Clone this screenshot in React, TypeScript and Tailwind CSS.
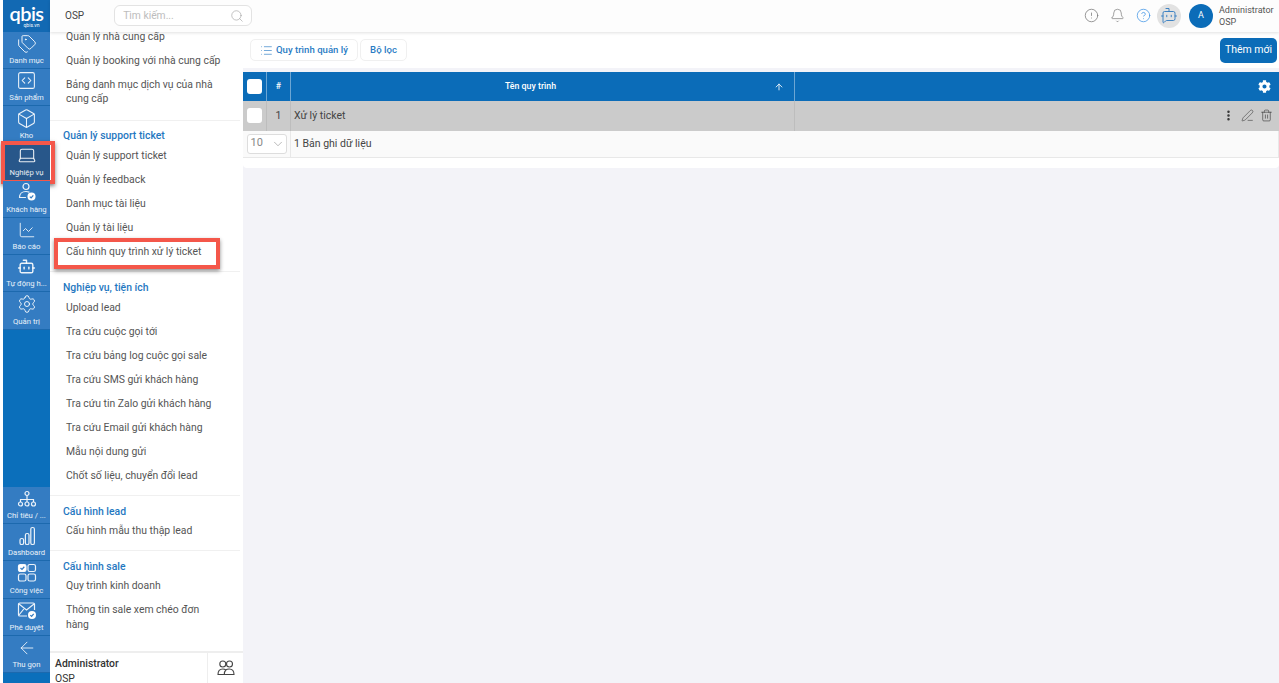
import type { ReactNode } from "react";
import { FaCog } from "react-icons/fa";
import { ArrowUp, ChevronDown, List, PenLine, Search, Trash2, EllipsisVertical, Settings, Bell, CircleHelp, CircleAlert, ArrowLeft, Tags, SquareCode, Box, Laptop, ChartLine, Bot, BotMessageSquare } from "lucide-react";

function UserBadgeIcon() {
  return (
    <svg width="20" height="20" viewBox="0 0 20 20" fill="none" stroke="currentColor" strokeWidth="1.2">
      <circle cx="9" cy="4.5" r="3" />
      <path d="M2.5 15.5c0-3.5 2.5-6 6.5-6 1.2 0 2.2.2 3 .6M2.5 15.5h6" strokeLinecap="round" />
      <circle cx="14.5" cy="14.5" r="4" fill="white" stroke="none" />
      <path d="M12.8 14.6l1.3 1.3 2.2-2.6" stroke="#347cc2" strokeWidth="1.2" />
    </svg>
  );
}

function OrgIcon() {
  return (
    <svg width="20" height="18" viewBox="0 0 20 18" fill="none" stroke="currentColor" strokeWidth="1.2">
      <circle cx="10" cy="3.5" r="2" />
      <path d="M10 5.5v4M3.5 12V9.5h13V12M10 9.5V12" />
      <circle cx="3.5" cy="14" r="2" />
      <circle cx="10" cy="14" r="2" />
      <circle cx="16.5" cy="14" r="2" />
    </svg>
  );
}

function BarsIcon() {
  return (
    <svg width="20" height="20" viewBox="0 0 20 20" fill="none" stroke="currentColor" strokeWidth="1.2">
      <rect x="3" y="12.5" width="3.6" height="6" rx="1.6" />
      <rect x="8.4" y="7.5" width="3.6" height="11" rx="1.6" />
      <rect x="13.8" y="1.5" width="3.6" height="17" rx="1.6" />
    </svg>
  );
}

function TasksIcon() {
  return (
    <svg width="20" height="20" viewBox="0 0 20 20" fill="none" stroke="currentColor" strokeWidth="1.2">
      <rect x="1.5" y="1.5" width="7.5" height="7" rx="1.8" fill="white" />
      <path d="M3.5 5l1.5 1.4 2.3-2.6" stroke="#347cc2" strokeWidth="1.3" />
      <rect x="11" y="1.5" width="7.5" height="7" rx="1.8" />
      <rect x="1.5" y="11" width="7.5" height="7" rx="1.8" />
      <rect x="11" y="11" width="7.5" height="7" rx="1.8" />
    </svg>
  );
}

function MailBadgeIcon() {
  return (
    <svg width="20" height="19" viewBox="0 0 20 19" fill="none" stroke="currentColor" strokeWidth="1.2">
      <path d="M10 15H2.8A1.3 1.3 0 0 1 1.5 13.700V3.300A1.300 1.300 0 0 1 2.800 2h13.400a1.300 1.300 0 0 1 1.300 1.300V9" />
      <path d="M2 3l7.500 6L17 3M2 14l4.800-6" />
      <circle cx="15" cy="14" r="4" fill="white" stroke="none" />
      <path d="M13.300 14.100l1.300 1.300 2.100-2.600" stroke="#347cc2" strokeWidth="1.200" />
    </svg>
  );
}

function PeopleIcon() {
  return (
    <svg width="18" height="16" viewBox="0 0 18 16" fill="none" stroke="#444" strokeWidth="1.100">
      <circle cx="5.800" cy="4" r="3" />
      <circle cx="12.500" cy="4" r="3" />
      <path d="M1 14.500c0-3.500 2-5.500 4.800-5.500 1.200 0 2.200.3 3 1 .8-.7 1.900-1 3.400-1 2.800 0 4.800 2 4.800 5.500zM8.800 10c-1 1-1.500 2.500-1.500 4.500" />
    </svg>
  );
}

const topRail = [
  { label: "Danh mục", icon: <Tags size={20} strokeWidth={1.2} /> },
  { label: "Sản phẩm", icon: <SquareCode size={21} strokeWidth={1.2} /> },
  { label: "Kho", icon: <Box size={21} strokeWidth={1.2} /> },
  { label: "Nghiệp vụ", icon: <Laptop size={20} strokeWidth={1.3} />, active: true },
  { label: "Khách hàng", icon: <UserBadgeIcon /> },
  { label: "Báo cáo", icon: <ChartLine size={18} strokeWidth={1.2} /> },
  { label: "Tự động h...", icon: <Bot size={19} strokeWidth={1.8} /> },
  { label: "Quản trị", icon: <Settings size={20} strokeWidth={1.2} /> },
];

const bottomRail = [
  { label: "Chỉ tiêu / ...", icon: <OrgIcon /> },
  { label: "Dashboard", icon: <BarsIcon /> },
  { label: "Công việc", icon: <TasksIcon /> },
  { label: "Phê duyệt", icon: <MailBadgeIcon /> },
  { label: "Thu gọn", icon: <ArrowLeft size={20} strokeWidth={1.1} /> },
];

function RailItem({ label, icon, active }: { label: string; icon: ReactNode; active?: boolean }) {
  return (
    <div
      className={`relative flex h-[37.2px] flex-col items-center justify-end border-b border-[#1c69ae] pb-[2px] text-[7.7px] leading-[11px] text-white/90 ${
        active ? "bg-[#28578a]" : "bg-[#347cc2]"
      }`}
    >
      <span className="flex h-[23px] items-center">{icon}</span>
      <span className="whitespace-nowrap">{label}</span>
      {active && (
        <span className="absolute -bottom-[4px] -left-[2px] -right-[5px] -top-[3px] border-4 border-[#f4574a] shadow-[0_2px_4px_rgba(0,0,0,0.5)]" />
      )}
    </div>
  );
}

function MenuItem({ children, boxed }: { children: ReactNode; boxed?: boolean }) {
  return (
    <div className="relative py-[4.8px] pl-4 pr-[17px] text-[10.4px] leading-[14.5px] text-[#555]">
      {children}
      {boxed && (
        <span className="absolute -bottom-[4px] -top-[3px] left-[4px] right-[20px] border-4 border-[#f4574a] shadow-[0_2px_4px_rgba(0,0,0,0.45)]" />
      )}
    </div>
  );
}

function MenuGroup({ title, items, last }: { title: string; items: string[]; last?: boolean }) {
  return (
    <div className={`mr-[3px] pb-[6.5px] pt-[7.5px] ${last ? "" : "border-b border-[#f0f0f0]"}`}>
      <div className="pl-[13px] text-[10.4px] font-medium leading-[16px] text-[#1f78c1]">{title}</div>
      <div>
        {items.map((t) => (
          <MenuItem key={t} boxed={t === "Cấu hình quy trình xử lý ticket"}>
            {t}
          </MenuItem>
        ))}
      </div>
    </div>
  );
}

function Checkbox() {
  return <div className="h-[15px] w-[15px] rounded-[3px] bg-white" />;
}

export default function App() {
  return (
    <div className="flex h-[683px] w-[1279px] overflow-hidden bg-white font-['Roboto',sans-serif]">
      <div className="w-[3px] shrink-0 bg-white" />
      <aside className="relative z-10 flex w-[47px] shrink-0 flex-col justify-between bg-[#0b6fbb] pb-[10px]">
        <div>
          <div className="flex h-[32px] flex-col items-center justify-center bg-[#1269b3] pt-[1px] text-white">
            <div className="font-['Lato',sans-serif] text-[20px] font-semibold leading-[15px] tracking-[-0.6px]">qbis</div>
            <div className="ml-[10px] mt-[2px] text-[5px] leading-[5px]">qbis.vn</div>
          </div>
          {topRail.map((r) => (
            <RailItem key={r.label} {...r} />
          ))}
        </div>
        <div>
          {bottomRail.map((r) => (
            <RailItem key={r.label} {...r} />
          ))}
        </div>
      </aside>

      <div className="flex min-w-0 flex-1 flex-col">
        <header className="z-10 flex h-[32px] shrink-0 items-center bg-[#fdfdfd] pb-[1px] pr-[5px] shadow-[0_1px_3px_rgba(0,0,0,0.12)]">
          <span className="pl-[15px] text-[10px] text-[#444]">OSP</span>
          <div className="ml-[30px] flex h-[21px] w-[138px] items-center justify-between rounded-[6px] border border-[#e3e3e3] bg-white pl-2 pr-[7px] text-[10.3px] text-[#bdbdbd]">
            <span>Tìm kiếm...</span>
            <Search size={14} strokeWidth={1} className="text-[#999]" />
          </div>
          <div className="ml-auto flex items-center">
            <CircleAlert size={15} strokeWidth={1.2} className="text-[#777]" />
            <Bell size={15} strokeWidth={1.1} className="ml-[11px] text-[#777]" />
            <CircleHelp size={15} strokeWidth={1.2} className="ml-[11px] text-[#3f94e6]" />
            <div className="ml-[6px] flex h-[24px] w-[24px] items-center justify-center rounded-full bg-[#e2e2e2]">
              <BotMessageSquare size={18} strokeWidth={1.2} className="text-[#2c78bf]" />
            </div>
            <div className="ml-[8px] flex h-[24px] w-[24px] items-center justify-center rounded-full bg-[#0b6cb8] text-[9px] text-white">
              A
            </div>
            <div className="ml-[6px] w-[55px] text-[9px] leading-[12px] text-[#555]">
              <div>Administrator</div>
              <div>OSP</div>
            </div>
          </div>
        </header>

        <div className="flex min-h-0 flex-1">
          <nav className="flex w-[193px] shrink-0 flex-col bg-white">
            <div className="min-h-0 flex-1 overflow-hidden">
              <div className="-mt-[7px]">
                <div className="mr-[3px] border-b border-[#f0f0f0] pb-[8px]">
                  <MenuItem>Quản lý nhà cung cấp</MenuItem>
                  <MenuItem>Quản lý booking với nhà cung cấp</MenuItem>
                  <MenuItem>Bảng danh mục dịch vụ của nhà cung cấp</MenuItem>
                </div>
                <MenuGroup
                  title="Quản lý support ticket"
                  items={[
                    "Quản lý support ticket",
                    "Quản lý feedback",
                    "Danh mục tài liệu",
                    "Quản lý tài liệu",
                    "Cấu hình quy trình xử lý ticket",
                  ]}
                />
                <MenuGroup
                  title="Nghiệp vụ, tiện ích"
                  items={[
                    "Upload lead",
                    "Tra cứu cuộc gọi tới",
                    "Tra cứu bảng log cuộc gọi sale",
                    "Tra cứu SMS gửi khách hàng",
                    "Tra cứu tin Zalo gửi khách hàng",
                    "Tra cứu Email gửi khách hàng",
                    "Mẫu nội dung gửi",
                    "Chốt số liệu, chuyển đổi lead",
                  ]}
                />
                <MenuGroup title="Cấu hình lead" items={["Cấu hình mẫu thu thập lead"]} />
                <MenuGroup
                  title="Cấu hình sale"
                  last
                  items={["Quy trình kinh doanh", "Thông tin sale xem chéo đơn hàng"]}
                />
              </div>
            </div>
            <div className="flex h-[32px] shrink-0 border-t-2 border-[#eee] text-[10.4px] leading-[15px] text-[#333]">
              <div className="flex-1 pl-[5px] pt-[3px]">
                <div className="font-medium">Administrator</div>
                <div>OSP</div>
              </div>
              <div className="flex w-[36px] items-center justify-center border-l border-[#eee]">
                <PeopleIcon />
              </div>
            </div>
          </nav>

          <main className="flex min-w-0 flex-1 flex-col bg-[#f3f3f8]">
            <div className="flex h-[36px] shrink-0 items-center justify-between bg-white pl-[7px] pr-[2px]">
              <div className="flex gap-[2px] text-[9.6px] font-medium text-[#2a7cc4]">
                <div className="flex h-[22px] w-[108px] items-center gap-[3px] rounded-[5px] border border-[#f0f0f0] pl-[9px]">
                  <List size={13} strokeWidth={1.2} />
                  Quy trình quản lý
                </div>
                <div className="flex h-[22px] w-[47px] items-center justify-center rounded-[5px] border border-[#f0f0f0]">Bộ lọc</div>
              </div>
              <button type="button" className="h-[25px] w-[57px] rounded-[5px] bg-[#0b6cb8] text-[10.5px] text-white">
                Thêm mới
              </button>
            </div>
            <div className="mt-[4px] rounded-b-[4px] bg-white pb-[10px]">
              <div className="grid h-[29px] grid-cols-[24px_24px_504px_1fr] items-center bg-[#0b6cb8] text-[8.8px] font-medium text-white">
                <div className="flex h-full items-center justify-center border-r border-white/40"><Checkbox /></div>
                <div className="flex h-full items-center justify-center border-r border-white/40">#</div>
                <div className="relative flex h-full items-center justify-center border-r border-white/40 pr-[24px]">
                  Tên quy trình
                  <ArrowUp size={10} className="absolute right-[10px]" />
                </div>
                <div className="flex justify-end pr-[8px]">
                  <FaCog size={13} />
                </div>
              </div>
              <div className="grid h-[29.5px] grid-cols-[24px_24px_504px_1fr] items-center bg-[#cbcbcb] text-[10.5px] text-[#444]">
                <div className="flex h-full items-center justify-center border-r border-[#bdbdbd]"><Checkbox /></div>
                <div className="flex h-full items-center justify-center border-r border-[#bdbdbd]">1</div>
                <div className="flex h-full items-center border-r border-[#bdbdbd] pl-[3px]">Xử lý ticket</div>
                <div className="flex items-center justify-end gap-[6px] pr-[6px] text-[#333]">
                  <EllipsisVertical size={13} strokeWidth={2.6} />
                  <PenLine size={13} strokeWidth={1} />
                  <Trash2 size={13} strokeWidth={1.1} />
                </div>
              </div>
              <div className="flex h-[27px] items-center border-b border-r border-[#e8e8e8] bg-[#fafafa] text-[10.5px] text-[#444]">
                <div className="flex h-full w-[48px] items-center justify-center border-r border-[#e8e8e8]">
                  <div className="flex h-[20px] w-[40px] items-center justify-between rounded-[3px] border border-[#ddd] bg-white pl-[3px] pr-[1px] text-[11px] text-[#888]">
                    10
                    <ChevronDown size={14} strokeWidth={1} />
                  </div>
                </div>
                <span className="pl-[3px]">1 Bản ghi dữ liệu</span>
              </div>
            </div>
          </main>
        </div>
      </div>
    </div>
  );
}
